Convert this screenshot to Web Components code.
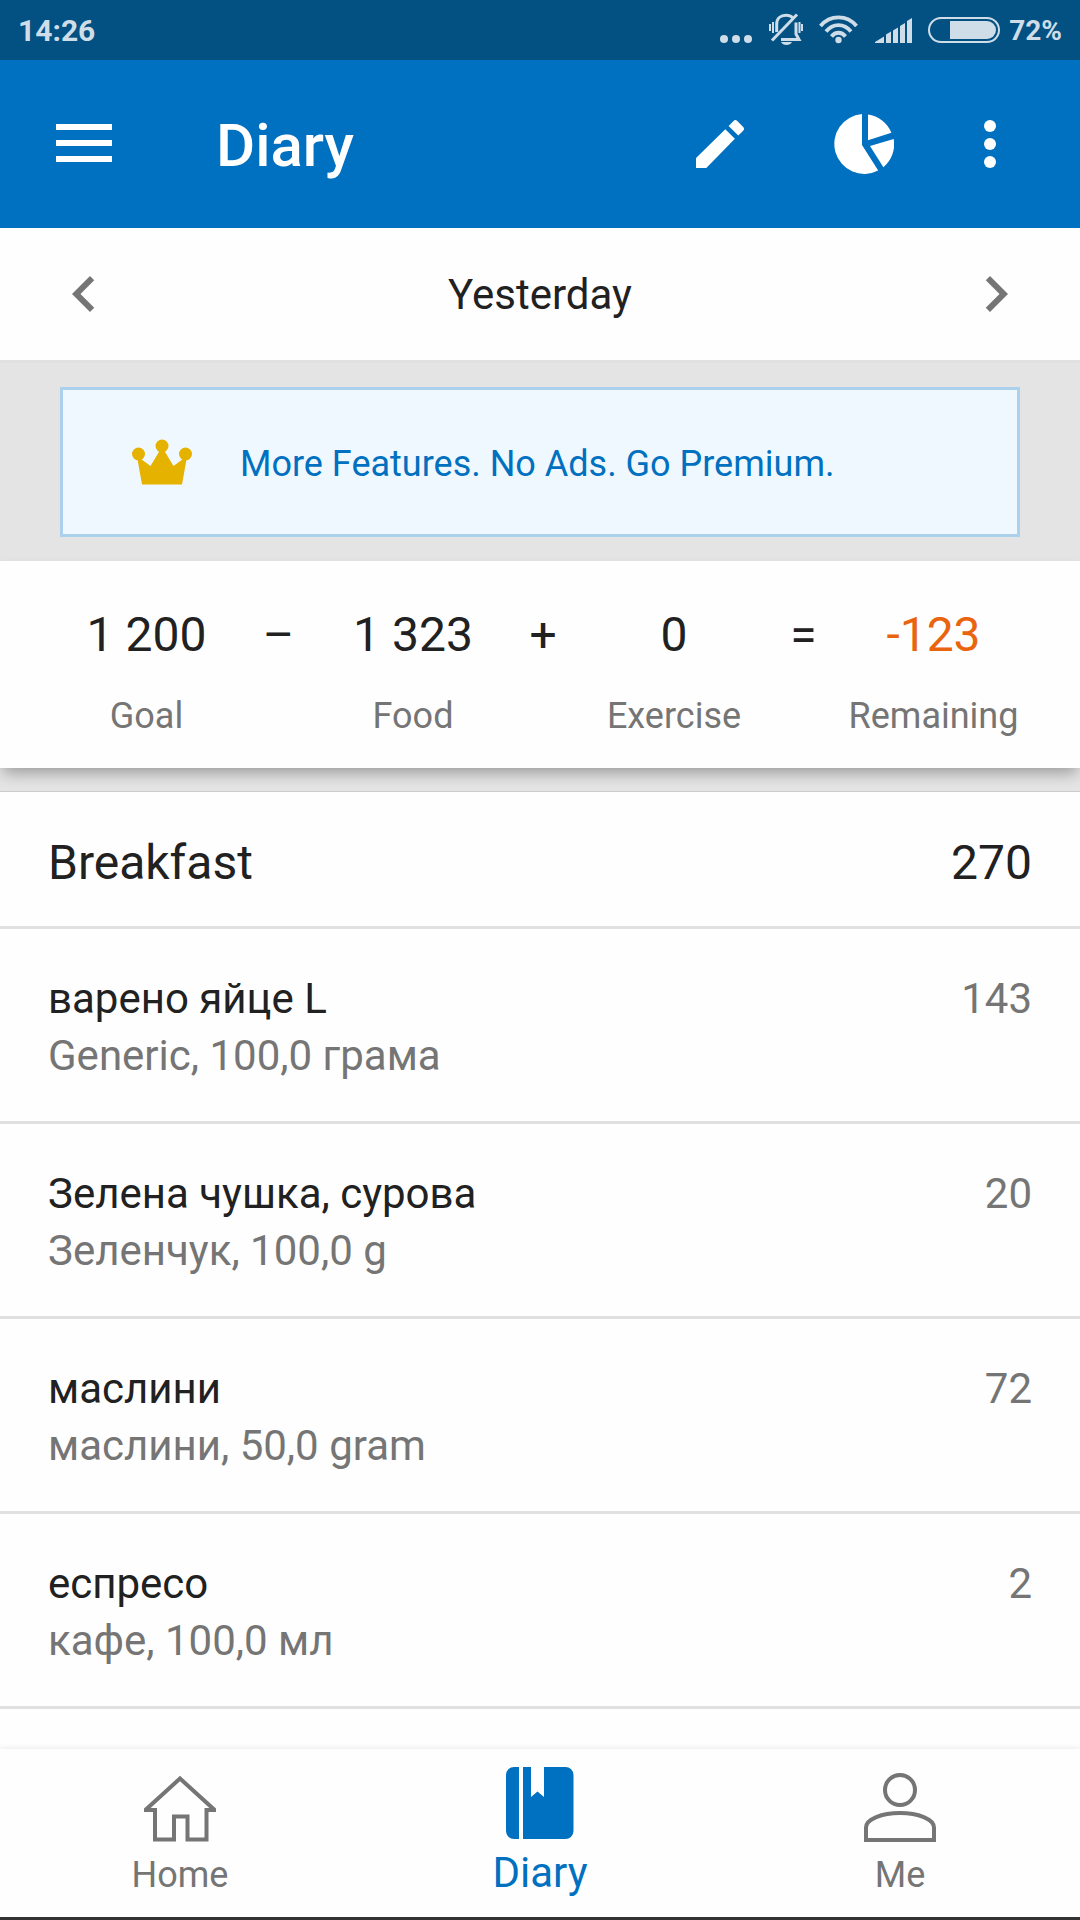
<!DOCTYPE html>
<html lang="en">
<head>
<meta charset="utf-8">
<meta name="viewport" content="width=device-width, initial-scale=1">
<title>Diary</title>
<style>
  html { background: #e4e4e4; }
  body {
    margin: 0;
    font-family: Roboto, "Noto Sans", sans-serif;
    color: #212121;
    --brand: #0070c0;
    --muted: #757575;
    --line: #e0e0e0;
    --surface: #fefefe;
  }
</style>
</head>
<body>
<diary-app>
  <status-bar slot="top" time="14:26" battery="72%"></status-bar>
  <app-bar slot="top">Diary</app-bar>
  <date-picker-bar>Yesterday</date-picker-bar>
  <premium-banner>More Features. No Ads. Go Premium.</premium-banner>
  <calorie-summary>
    <calorie-cell label="Goal">1&nbsp;200</calorie-cell>
    <calorie-cell>–</calorie-cell>
    <calorie-cell label="Food">1&nbsp;323</calorie-cell>
    <calorie-cell>+</calorie-cell>
    <calorie-cell label="Exercise">0</calorie-cell>
    <calorie-cell>=</calorie-cell>
    <calorie-cell label="Remaining" over>-123</calorie-cell>
  </calorie-summary>
  <meal-section name="Breakfast" total="270">
    <food-entry name="варено яйце L" calories="143">Generic, 100,0 грама</food-entry>
    <food-entry name="Зелена чушка, сурова" calories="20">Зеленчук, 100,0 g</food-entry>
    <food-entry name="маслини" calories="72">маслини, 50,0 gram</food-entry>
    <food-entry name="еспресо" calories="2">кафе, 100,0 мл</food-entry>
  </meal-section>
  <bottom-nav slot="bottom">
    <nav-item icon="home">Home</nav-item>
    <nav-item icon="diary" active>Diary</nav-item>
    <nav-item icon="me">Me</nav-item>
  </bottom-nav>
</diary-app>

<script>
const RESET = `
  *, *::before, *::after { box-sizing: border-box; }
  svg { display: block; flex: none; }
  button, a { margin: 0; padding: 0; border: 0; background: none; font: inherit; color: inherit; text-decoration: none; cursor: pointer; }
`;

function define(tag, render) {
  customElements.define(tag, class extends HTMLElement {
    connectedCallback() {
      if (this.shadowRoot) return;
      const t = document.createElement('template');
      const { css, html } = render(this);
      t.innerHTML = `<style>${RESET}${css}</style>${html}`;
      this.attachShadow({ mode: 'open' }).append(t.content.cloneNode(true));
    }
  });
}

define('diary-app', () => ({
  css: `
    :host { display: flex; flex-direction: column; min-height: 100vh; }
    header { position: sticky; top: 0; z-index: 3; }
    main { flex: 1; display: flex; flex-direction: column; }
  `,
  html: `<header><slot name="top"></slot></header><main><slot></slot></main><slot name="bottom"></slot>`
}));

define('status-bar', el => ({
  css: `
    :host { display: flex; align-items: center; justify-content: space-between; height: 60px; padding: 0 18px; background: #035183; color: #cfdde8; font-weight: 700; }
    time { font-size: 30px; }
    .icons { display: flex; align-items: center; gap: 16px; }
    .battery { display: flex; align-items: center; gap: 9px; font-size: 28px; }
  `,
  html: `
    <time>${el.getAttribute('time')}</time>
    <div class="icons">
      <svg width="33" height="60" viewBox="0 0 33 60" fill="currentColor" aria-hidden="true"><circle cx="4" cy="39" r="4"/><circle cx="16" cy="39" r="4"/><circle cx="28" cy="39" r="4"/></svg>
      <svg width="34" height="60" viewBox="0 0 34 60" fill="none" stroke="currentColor" aria-hidden="true">
        <path d="M7.700 32V24C7.700 18.500 11.500 15.300 17 15.300c3 0 5.300 1 7 2.700" stroke-width="3"/>
        <path d="M27 22.500V34l3 5.500H12" stroke-width="3"/>
        <path d="M3 40.500L28 14.500" stroke-width="3"/>
        <path d="M12 42h11c-1 2-3 3-5.500 3s-4.500-1-5.500-3z" fill="currentColor" stroke="none"/>
        <path d="M1 24v7M4 22v11M30.500 22v11M33 24v7" stroke-width="2"/>
      </svg>
      <svg width="39" height="60" viewBox="0 0 39 60" fill="none" stroke="currentColor" stroke-width="3.800" aria-hidden="true">
        <path d="M1.500 26C11 14.500 28 14.500 37.500 26"/><path d="M7 31.500C14 23 25 23 32 31.500"/><path d="M12.500 36.500C16.500 31.500 22.500 31.500 26.500 36.500"/><circle cx="19.500" cy="40" r="3.200" fill="currentColor" stroke="none"/>
      </svg>
      <svg width="38" height="60" viewBox="0 0 38 60" fill="currentColor" aria-hidden="true">
        <path d="M1 43v-1l9-5.500v6.500zM12 43v-8.500l5-3v11.500zM19 43V30.500l5-3v15.500zM26 43V26l5-3v20zM33 43V21l5-3v25z"/>
      </svg>
      <div class="battery">
        <svg width="72" height="60" viewBox="0 0 72 60" aria-hidden="true"><rect x="1" y="18" width="70" height="24" rx="12" fill="none" stroke="currentColor" stroke-width="2"/><path d="M22 21h37a9 9 0 0 1 0 18H22z" fill="currentColor"/></svg>
        <span>${el.getAttribute('battery')}</span>
      </div>
    </div>`
}));

define('app-bar', () => ({
  css: `
    :host { display: flex; align-items: center; height: 168px; padding: 0 36px 0 12px; background: var(--brand); color: #fff; }
    button { display: flex; align-items: center; justify-content: center; width: 144px; height: 144px; }
    button.more { width: 108px; }
    h1 { flex: 1; margin: 0 0 0 60px; padding-top: 4px; font-size: 60px; line-height: 72px; font-weight: 500; }
  `,
  html: `
    <button aria-label="Menu"><svg width="56" height="40" viewBox="0 0 56 40" fill="currentColor"><path d="M0 0h56v6H0zM0 16h56v6H0zM0 32h56v6H0z"/></svg></button>
    <h1><slot></slot></h1>
    <button aria-label="Edit"><svg width="48" height="48" viewBox="0 0 48 48" fill="currentColor"><path d="M0 38L29.300 9.200l9.600 9.600L10.300 48H0zM32.600 5.900l4.900-4.900q1.900-1.900 3.800 0l5.900 5.900q1.700 1.900 0 3.800l-4.900 4.900z"/></svg></button>
    <button aria-label="Nutrition"><svg width="60" height="60" viewBox="0 0 60 60" fill="currentColor"><path d="M28 0A30 30 0 1 0 44.200 56.500L28 31zM34 .6V26.300L57.400 18.800A30 30 0 0 0 34 .6zM36 31.900L59.700 25A30 30 0 0 1 49.400 53.200z"/></svg></button>
    <button class="more" aria-label="More options"><svg width="12" height="48" viewBox="0 0 12 48" fill="currentColor"><circle cx="6" cy="6" r="6"/><circle cx="6" cy="24" r="6"/><circle cx="6" cy="42" r="6"/></svg></button>`
}));

define('date-picker-bar', () => ({
  css: `
    :host { display: flex; align-items: center; justify-content: space-between; padding: 30px 48px; background: var(--surface); border-bottom: 3px solid var(--line); }
    button { color: var(--muted); }
    .day { padding-top: 2px; color: inherit; font-size: 42px; line-height: 52px; }
  `,
  html: `
    <button aria-label="Previous day"><svg width="72" height="72" viewBox="0 0 24 24" fill="currentColor"><path d="M15.410 7.410L14 6l-6 6 6 6 1.410-1.410L10.830 12z"/></svg></button>
    <button class="day"><slot></slot></button>
    <button aria-label="Next day"><svg width="72" height="72" viewBox="0 0 24 24" fill="currentColor"><path d="M8.590 16.590L10 18l6-6-6-6-1.410 1.410L13.170 12z"/></svg></button>`
}));

define('premium-banner', () => ({
  css: `
    :host { display: block; padding: 24px 60px; background: #e4e4e4; }
    a { display: flex; align-items: center; gap: 48px; padding: 53px 69px 49px; border: 3px solid #acd1ec; background: #f0f8ff; color: var(--brand); font-size: 36px; line-height: 42px; }
    svg { margin: -6px 0 -2px; }
  `,
  html: `<a href="#premium"><svg width="60" height="46" viewBox="0 0 60 46" fill="#e5b200" aria-hidden="true"><circle cx="6.500" cy="15" r="6.500"/><circle cx="30" cy="7" r="6.500"/><circle cx="53.500" cy="15" r="6.500"/><path d="M5.500 20.500L9 20l9.500 7L27.500 12h5l9 15L51 20l3.500.500L50 45.500H10z"/></svg><span><slot></slot></span></a>`
}));

define('calorie-summary', () => ({
  css: `
    :host { position: relative; z-index: 1; display: grid; grid-template-columns: 137fr 127fr 142fr 118fr 144fr 115fr 145fr; padding: 46px 74px 31px 78px; background: var(--surface); box-shadow: 0 8px 14px -3px rgba(0, 0, 0, .32); }
    ::slotted(*) { min-width: 0; }
  `,
  html: `<slot></slot>`
}));

define('calorie-cell', el => ({
  css: `
    :host { display: flex; flex-direction: column; align-items: center; gap: 32px; white-space: nowrap; }
    .value { font-size: 48px; line-height: 56px; }
    :host([over]) .value { color: #ea640f; }
    .label { font-size: 36px; line-height: 42px; color: var(--muted); }
  `,
  html: `<span class="value"><slot></slot></span>${el.hasAttribute('label') ? `<span class="label">${el.getAttribute('label')}</span>` : ''}`
}));

define('meal-section', el => ({
  css: `
    :host { display: block; flex: 1; margin-top: 23px; border-top: 1px solid #ccc; background: var(--surface); }
    header { display: flex; justify-content: space-between; padding: 43px 48px 35px; border-bottom: 3px solid var(--line); font-size: 48px; line-height: 56px; }
    h2 { margin: 0; font: inherit; }
  `,
  html: `<section><header><h2>${el.getAttribute('name')}</h2><span>${el.getAttribute('total')}</span></header><slot></slot></section>`
}));

define('food-entry', el => ({
  css: `
    :host { display: flex; justify-content: space-between; padding: 41px 48px 37px; border-bottom: 3px solid var(--line); font-size: 42px; line-height: 57px; color: var(--muted); }
    .text { display: flex; flex-direction: column; }
    .name { color: #212121; }
  `,
  html: `<div class="text"><span class="name">${el.getAttribute('name')}</span><span><slot></slot></span></div><span>${el.getAttribute('calories')}</span>`
}));

define('bottom-nav', () => ({
  css: `
    :host { display: block; position: sticky; bottom: 0; z-index: 2; border-bottom: 3px solid #333; background: var(--surface); box-shadow: 0 -1px 6px rgba(0, 0, 0, .08); }
    nav { display: grid; grid-template-columns: repeat(3, 1fr); height: 168px; }
  `,
  html: `<nav><slot></slot></nav>`
}));

const NAV_ICONS = {
  home: `<path d="M36 5.500L2 36.400V37h9v29.500h19V43.500h13.500v23h19V37H70v-.600z" fill="none" stroke="currentColor" stroke-width="4"/>`,
  diary: `<path d="M10 0h5v72h-5a8 8 0 0 1-8-8V8a8 8 0 0 1 8-8zM19 0h8v30l6.500-5.500L40 30V0h21.500a8 8 0 0 1 8 8v56a8 8 0 0 1-8 8H19z" fill="currentColor"/>`,
  me: `<g fill="none" stroke="currentColor" stroke-width="4"><circle cx="36" cy="17" r="15"/><path d="M2 67V54.500C2 46 18 40 36 40s34 6 34 14.500V67z"/></g>`
};

define('nav-item', el => ({
  css: `
    :host { display: block; }
    a { display: flex; flex-direction: column; align-items: center; justify-content: flex-end; gap: 6px; height: 100%; padding-bottom: 18px; color: var(--muted); font-size: 36px; line-height: 48px; }
    :host([active]) a { gap: 10px; padding-bottom: 20px; color: var(--brand); font-size: 42px; }
  `,
  html: `<a href="#${el.getAttribute('icon')}"${el.hasAttribute('active') ? ' aria-current="page"' : ''}><svg width="72" height="72" viewBox="0 0 72 72" aria-hidden="true">${NAV_ICONS[el.getAttribute('icon')]}</svg><span><slot></slot></span></a>`
}));
</script>
</body>
</html>
